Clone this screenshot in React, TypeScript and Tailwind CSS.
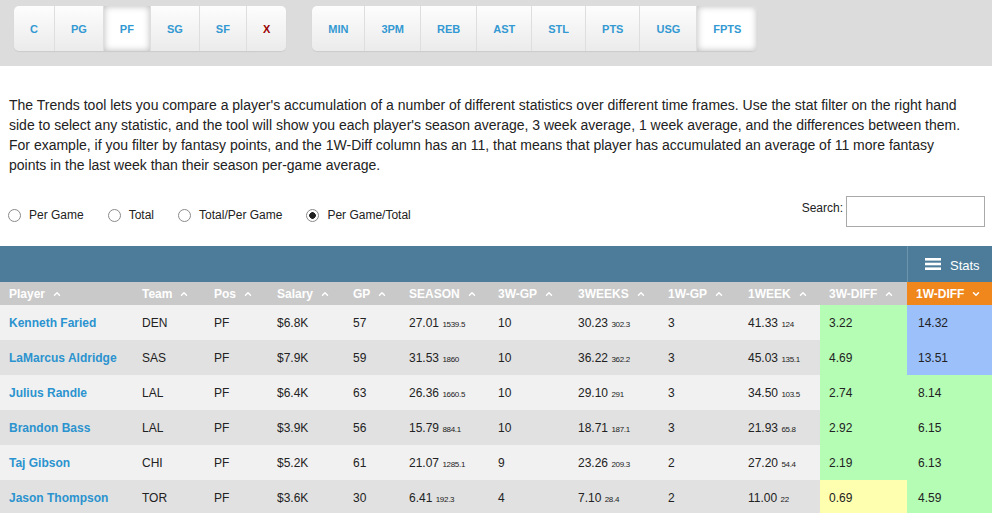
import { ChevronUp, ChevronDown } from "lucide-react"

const POSITIONS = ["C", "PG", "PF", "SG", "SF", "X"]
const STATS = ["MIN", "3PM", "REB", "AST", "STL", "PTS", "USG", "FPTS"]

type Row = {
  name: string
  team: string
  pos: string
  salary: string
  gp: string
  season: [string, string]
  gp3: string
  weeks3: [string, string]
  gp1: string
  week1: [string, string]
  diff3: string
  diff1: string
  c3: string
  c1: string
}

const GREEN = "bg-[#b5fdb5]"
const BLUE = "bg-[#9bc0fa]"
const YELLOW = "bg-[#ffffb0]"

const ROWS: Row[] = [
  { name: "Kenneth Faried", team: "DEN", pos: "PF", salary: "$6.8K", gp: "57", season: ["27.01", "1539.5"], gp3: "10", weeks3: ["30.23", "302.3"], gp1: "3", week1: ["41.33", "124"], diff3: "3.22", diff1: "14.32", c3: GREEN, c1: BLUE },
  { name: "LaMarcus Aldridge", team: "SAS", pos: "PF", salary: "$7.9K", gp: "59", season: ["31.53", "1860"], gp3: "10", weeks3: ["36.22", "362.2"], gp1: "3", week1: ["45.03", "135.1"], diff3: "4.69", diff1: "13.51", c3: GREEN, c1: BLUE },
  { name: "Julius Randle", team: "LAL", pos: "PF", salary: "$6.4K", gp: "63", season: ["26.36", "1660.5"], gp3: "10", weeks3: ["29.10", "291"], gp1: "3", week1: ["34.50", "103.5"], diff3: "2.74", diff1: "8.14", c3: GREEN, c1: GREEN },
  { name: "Brandon Bass", team: "LAL", pos: "PF", salary: "$3.9K", gp: "56", season: ["15.79", "884.1"], gp3: "10", weeks3: ["18.71", "187.1"], gp1: "3", week1: ["21.93", "65.8"], diff3: "2.92", diff1: "6.15", c3: GREEN, c1: GREEN },
  { name: "Taj Gibson", team: "CHI", pos: "PF", salary: "$5.2K", gp: "61", season: ["21.07", "1285.1"], gp3: "9", weeks3: ["23.26", "209.3"], gp1: "2", week1: ["27.20", "54.4"], diff3: "2.19", diff1: "6.13", c3: GREEN, c1: GREEN },
  { name: "Jason Thompson", team: "TOR", pos: "PF", salary: "$3.6K", gp: "30", season: ["6.41", "192.3"], gp3: "4", weeks3: ["7.10", "28.4"], gp1: "2", week1: ["11.00", "22"], diff3: "0.69", diff1: "4.59", c3: YELLOW, c1: GREEN },
]

const COLUMNS = [
  { label: "Player", w: "w-[133px]" },
  { label: "Team", w: "w-[72px]" },
  { label: "Pos", w: "w-[63px]" },
  { label: "Salary", w: "w-[76px]" },
  { label: "GP", w: "w-[56px]" },
  { label: "SEASON", w: "w-[89px]" },
  { label: "3W-GP", w: "w-[80px]" },
  { label: "3WEEKS", w: "w-[90px]" },
  { label: "1W-GP", w: "w-[80px]" },
  { label: "1WEEK", w: "w-[81px]" },
  { label: "3W-DIFF", w: "w-[87px]" },
  { label: "1W-DIFF", w: "w-[85px]" },
]

function ButtonGroup({ items, active, danger }: { items: string[]; active: string; danger?: string }) {
  return (
    <div className="flex h-[45px] rounded-[5px] overflow-hidden bg-gradient-to-b from-[#fdfdfd] to-[#ebebeb] shadow-[0_1px_1px_rgba(0,0,0,0.08)]">
      {items.map((it, i) => (
        <button
          key={it}
          type="button"
          className={`px-4 pt-[2px] text-[11px] font-bold ${i > 0 ? "border-l border-[#dedede]" : ""} ${it === danger ? "text-[#990000]" : "text-[#3399d2]"} ${it === active ? "bg-white shadow-[inset_0_0_7px_rgba(0,0,0,0.28)]" : ""}`}
        >
          {it}
        </button>
      ))}
    </div>
  )
}

function Val({ v }: { v: [string, string] }) {
  return (
    <>
      {v[0]} <span className="text-[8px] tracking-[-0.3px]">{v[1]}</span>
    </>
  )
}

export default function App() {
  return (
    <div className="w-[992px] h-[513px] overflow-hidden bg-white font-['Liberation_Sans',Arial,sans-serif] text-[#222]">
      <div className="h-[66px] bg-[#dcdcdc] flex items-start gap-[26px] pt-[6px] pl-[14px]">
        <ButtonGroup items={POSITIONS} active="PF" danger="X" />
        <ButtonGroup items={STATS} active="FPTS" />
      </div>

      <p className="pl-[9px] pr-[21px] pt-[29px] text-[14px] leading-[20px]">
        The Trends tool lets you compare a player's accumulation of a number of different statistics over different time frames. Use the stat filter on the right hand side to select any statistic, and the tool will show you each player's season average, 3 week average, 1 week average, and the differences between them. For example, if you filter by fantasy points, and the 1W-Diff column has an 11, that means that player has accumulated an average of 11 more fantasy points in the last week than their season per-game average.
      </p>

      <div className="flex items-center justify-between pl-[8px] pr-[7px] mt-[21px] h-[31px]">
        <div className="flex items-center gap-[24px] text-[12px] pt-[7px]">
          {["Per Game", "Total", "Total/Per Game", "Per Game/Total"].map((l) => (
            <label key={l} className="flex items-center gap-[8px]">
              <input
                type="radio"
                name="mode"
                defaultChecked={l === "Per Game/Total"}
                className="appearance-none w-[13px] h-[13px] m-0 rounded-full border border-[#8a8a8a] bg-white checked:bg-[radial-gradient(circle,#222_0,#222_3px,#fff_3.6px)]"
              />
              {l}
            </label>
          ))}
        </div>
        <div className="flex items-center gap-[3px] text-[12px]">
          <span className="-mt-[8px]">Search:</span>
          <input type="text" className="w-[139px] h-[31px] border border-[#a9a9a9] bg-white" />
        </div>
      </div>

      <div className="mt-[19px]">
        <div className="h-[36px] bg-[#4c7c99] flex justify-end">
          <div className="w-[85px] border-l border-[#6d96ae] flex items-center gap-[9px] pl-[17px] text-white text-[13px]">
            <svg width="16" height="12" viewBox="0 0 16 12" className="fill-white">
              <rect x="0" y="0" width="16" height="2.6" />
              <rect x="0" y="4.7" width="16" height="2.6" />
              <rect x="0" y="9.4" width="16" height="2.6" />
            </svg>
            <span className="mt-[3px]">Stats</span>
          </div>
        </div>
        <table className="table-fixed border-collapse w-[992px] text-[12px]">
          <thead>
            <tr className="h-[23px] bg-[#c9c9c9] text-white font-bold">
              {COLUMNS.map((c, i) => (
                <th key={c.label} className={`${c.w} text-left pl-[9px] p-0 ${i === 11 ? "bg-[#f0871c]" : ""}`}>
                  <span className="inline-flex items-center gap-[7px]">
                    {c.label}
                    {i === 11 ? <ChevronDown size={10} strokeWidth={3.5} /> : <ChevronUp size={10} strokeWidth={3.5} />}
                  </span>
                </th>
              ))}
            </tr>
          </thead>
          <tbody>
            {ROWS.map((r, i) => (
              <tr key={r.name} className={`h-[35px] ${i % 2 === 0 ? "bg-[#f1f1f1]" : "bg-[#e1e1e1]"}`}>
                <td className="pl-[9px] font-bold text-[#2b93cf]">{r.name}</td>
                <td className="pl-[9px]">{r.team}</td>
                <td className="pl-[9px]">{r.pos}</td>
                <td className="pl-[9px]">{r.salary}</td>
                <td className="pl-[9px]">{r.gp}</td>
                <td className="pl-[9px]"><Val v={r.season} /></td>
                <td className="pl-[9px]">{r.gp3}</td>
                <td className="pl-[9px]"><Val v={r.weeks3} /></td>
                <td className="pl-[9px]">{r.gp1}</td>
                <td className="pl-[9px]"><Val v={r.week1} /></td>
                <td className={`pl-[9px] ${r.c3}`}>{r.diff3}</td>
                <td className={`pl-[11px] ${r.c1}`}>{r.diff1}</td>
              </tr>
            ))}
          </tbody>
        </table>
      </div>
    </div>
  )
}
